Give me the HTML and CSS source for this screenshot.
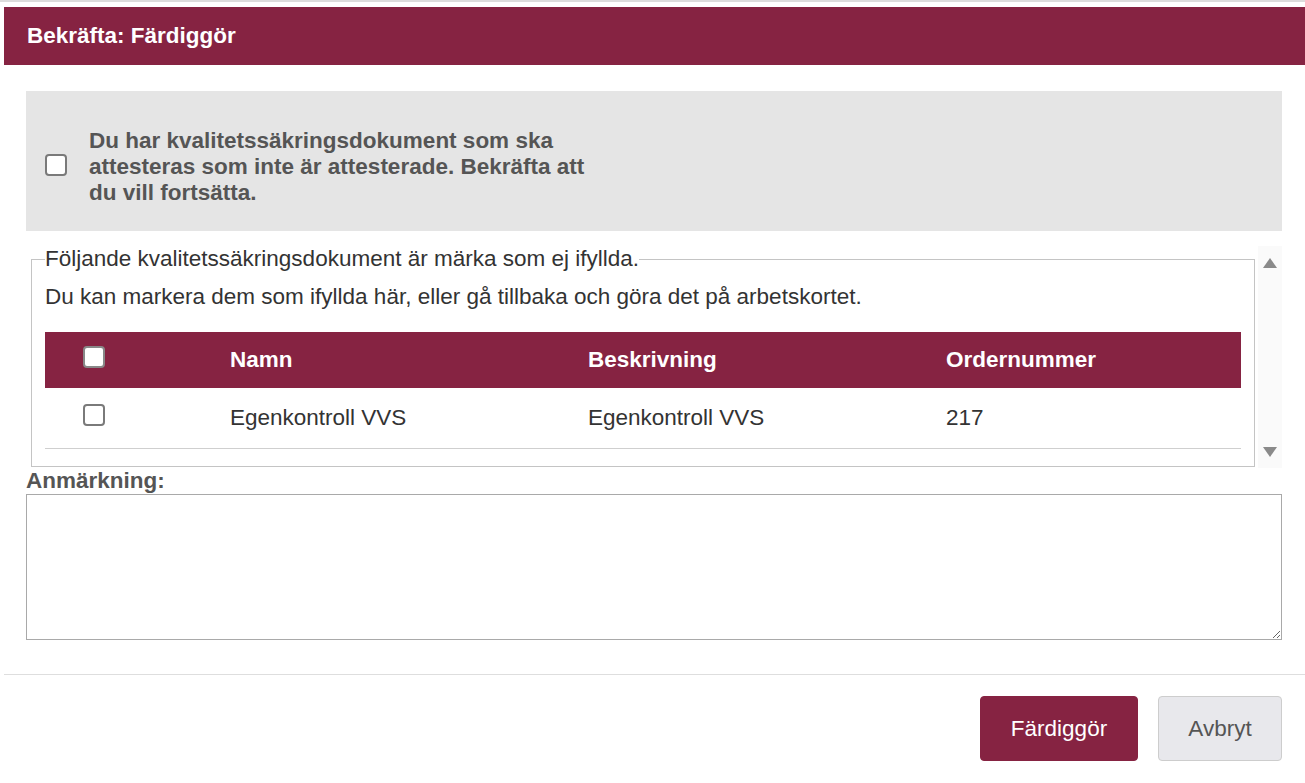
FILE: index.html
```html
<!DOCTYPE html>
<html lang="sv">
<head>
    <meta charset="UTF-8">
    <title>Bekräfta: Färdiggör</title>
    <link rel="stylesheet" href="styles.css">
</head>
<body>
<div class="topline"></div>
<div id="dialog">
    <div class="dialog-header">Bekräfta: Färdiggör</div>

    <div class="dialog-body">
        <label class="confirm-box">
            <input type="checkbox" class="check">
            <span class="confirm-text">Du har kvalitetssäkringsdokument som ska attesteras som inte är attesterade. Bekräfta att du vill fortsätta.</span>
        </label>

        <div class="scroll-area">
            <div class="scroll-content">
                <fieldset class="docs">
                    <legend>Följande kvalitetssäkringsdokument är märka som ej ifyllda.</legend>
                    <p>Du kan markera dem som ifyllda här, eller gå tillbaka och göra det på arbetskortet.</p>
                    <table class="doc-table">
                        <thead>
                        <tr>
                            <th class="col-check"><input type="checkbox" class="check"></th>
                            <th class="col-name">Namn</th>
                            <th class="col-desc">Beskrivning</th>
                            <th>Ordernummer</th>
                        </tr>
                        </thead>
                        <tbody>
                        <tr>
                            <td class="col-check"><input type="checkbox" class="check"></td>
                            <td>Egenkontroll VVS</td>
                            <td>Egenkontroll VVS</td>
                            <td>217</td>
                        </tr>
                        </tbody>
                    </table>
                </fieldset>
            </div>
            <div class="scrollbar">
                <span class="arrow up"></span>
                <span class="arrow down"></span>
            </div>
        </div>

        <label class="note-label" for="note">Anmärkning:</label>
        <textarea id="note" class="note"></textarea>
    </div>

    <div class="dialog-footer">
        <button class="button primary">Färdiggör</button>
        <button class="button cancel">Avbryt</button>
    </div>
</div>
</body>
</html>
```

FILE: styles.css
```css
body {
    margin: 0;
    padding: 0;
    background: #fff;
    font-family: "Liberation Sans", Arial, sans-serif;
    font-size: 22.5px;
    color: #333;
    overflow: hidden;
}

.topline {
    height: 2px;
    background: #dcdcdc;
}

#dialog {
    margin: 5px 0 0 4px;
}

.dialog-header {
    height: 58px;
    background: #862342;
    color: #fff;
    font-size: 22.5px;
    font-weight: bold;
    padding: 0 23px;
    display: flex;
    align-items: center;
}

.dialog-body {
    padding: 26px 23px 0 22px;
}

.check {
    appearance: none;
    -webkit-appearance: none;
    width: 22px;
    height: 22px;
    margin: 0;
    border: 2px solid #7a7a7a;
    border-radius: 4px;
    background: #fff;
    flex-shrink: 0;
    display: block;
}

.confirm-box {
    background: #e5e5e5;
    height: 140px;
    box-sizing: border-box;
    padding: 37px 0 25px 19px;
    display: flex;
    align-items: center;
    gap: 22px;
}

.confirm-box .check {
    margin-top: -4px;
}

.confirm-text {
    max-width: 510px;
    font-size: 22.5px;
    font-weight: bold;
    line-height: 26px;
    color: #555;
}

.scroll-area {
    margin-top: 15px;
    height: 222px;
    display: flex;
}

.scroll-content {
    flex: 1;
    overflow: hidden;
}

.docs {
    margin: 0 3px 0 5px;
    padding: 0 13px 17px;
    border: 1px solid #c4c4c4;
    font-size: 22.5px;
}

.docs legend {
    padding: 0;
    line-height: 26px;
    color: #333;
}

.docs p {
    margin: 12px 0 22px;
    line-height: 26px;
}

.doc-table {
    width: 100%;
    border-collapse: collapse;
    font-size: 22.5px;
}

.doc-table th {
    background: #862342;
    color: #fff;
    font-weight: bold;
    text-align: left;
    height: 56px;
    padding: 0;
}

.doc-table th .check {
    margin-top: -6px;
    border-color: #888;
}

.doc-table td {
    height: 60px;
    padding: 0;
    border-bottom: 1px solid #cfcfcf;
    color: #333;
}

.doc-table td .check {
    margin-top: -6px;
}

.col-check {
    width: 185px;
    padding-left: 38px !important;
    box-sizing: border-box;
}

.col-name,
.col-desc {
    width: 358px;
}

.scrollbar {
    width: 24px;
    background: #fafafa;
    display: flex;
    flex-direction: column;
    justify-content: space-between;
    align-items: center;
    padding: 12px 0 11px;
    box-sizing: border-box;
}

.arrow {
    width: 0;
    height: 0;
    border-left: 7px solid transparent;
    border-right: 7px solid transparent;
}

.arrow.up {
    border-bottom: 10px solid #8a8a8a;
}

.arrow.down {
    border-top: 10px solid #8a8a8a;
}

.note-label {
    display: block;
    margin-top: 0;
    font-size: 22.5px;
    font-weight: bold;
    line-height: 26px;
    color: #555;
}

.note {
    display: block;
    width: 100%;
    height: 146px;
    box-sizing: border-box;
    margin: 0;
    border: 1px solid #a9a9a9;
    font-family: "Liberation Sans", Arial, sans-serif;
    font-size: 22.5px;
}

.dialog-footer {
    margin-top: 34px;
    border-top: 1px solid #dedede;
    padding: 21px 23px;
    display: flex;
    justify-content: flex-end;
    gap: 20px;
}

.button {
    height: 65px;
    border: 1px solid #cdcdcd;
    border-radius: 4px;
    background: #e8e8ec;
    color: #555;
    font-family: "Liberation Sans", Arial, sans-serif;
    font-size: 22.5px;
    padding: 0;
}

.button.primary {
    width: 158px;
    background: #862342;
    border-color: #862342;
    color: #fff;
}

.button.cancel {
    width: 124px;
}
```
